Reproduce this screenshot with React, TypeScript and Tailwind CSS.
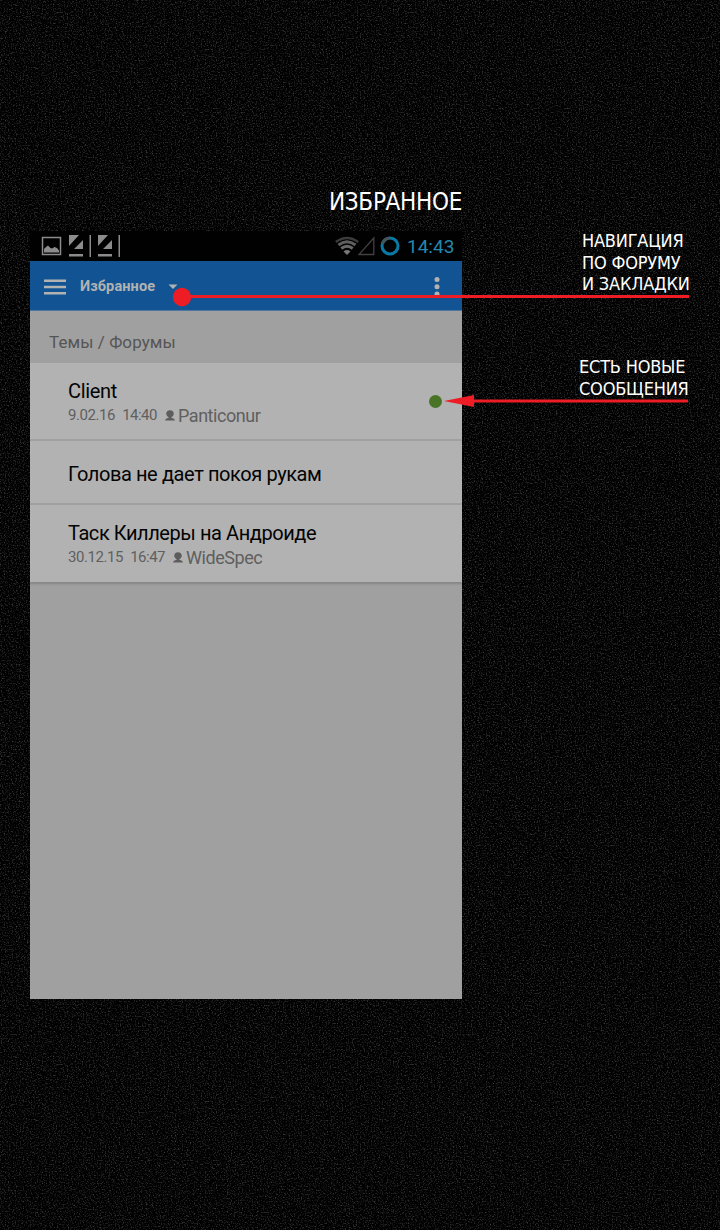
import React from "react";

const PersonIcon = () => (
  <svg width="10" height="11" viewBox="0 0 10 11" className="block shrink-0" fill="#5d5d5d">
    <path d="M1.200 4.200C1.200 1.400 2.600 .2 5 .2S8.800 1.400 8.800 4.200C8.300 5.800 7.200 6.800 6.500 7H3.500C2.800 6.800 1.700 5.800 1.200 4.200ZM0 10.600C0.300 9 1.700 8.300 3.200 8h3.600c1.500.3 2.900 1 3.200 2.600Z" />
    <rect x="3.500" y="6.500" width="3" height="2" />
  </svg>
);

const NoteIcon = () => (
  <svg width="23" height="22" viewBox="0 0 23 22" className="shrink-0" fill="#8c8c8c">
    <path d="M0 0H10L0 11ZM14 5V14H5ZM0 19H14V21.500H0ZM20.500 0H22V22H20.500Z" />
  </svg>
);

const StatusBar = () => (
  <div className="flex h-[30px] items-center bg-[#010101] pl-[11px] pr-2">
    <svg width="21" height="20" viewBox="0 0 21 20" className="mr-[7px] shrink-0">
      <rect x="1.500" y="1.500" width="18" height="17" fill="none" stroke="#8c8c8c" strokeWidth="1.500" />
      <path d="M3 16.500V13L5 11L7 9.500L9.500 12L11 12.500L13.500 11L16 12L18 14.500V16.500Z" fill="#8c8c8c" />
    </svg>
    <NoteIcon />
    <div className="w-[6px]" />
    <NoteIcon />
    <svg width="66" height="22" viewBox="0 0 66 22" className="ml-auto shrink-0">
      <g fill="none" strokeWidth="3">
        <path d="M.8 7Q12 -1 23.200 7" stroke="#3b3b3b" strokeWidth="2.500" />
        <path d="M3.500 10Q12 3.500 20.500 10" stroke="#5f5f5f" />
        <path d="M6.300 13.500Q12 9 17.700 13.500" stroke="#696969" />
      </g>
      <path d="M8.500 16.500Q12 13.700 15.500 16.500L12 20Z" fill="#777" />
      <path d="M24 19.500H38.800V3Z" fill="none" stroke="#414141" strokeWidth="1.300" />
      <circle cx="55" cy="11" r="8" fill="none" stroke="#087ba5" strokeWidth="3" />
      <path d="M47.500 8.500Q49.500 3.500 54.500 3" fill="none" stroke="#4b5356" strokeWidth="3" />
    </svg>
    <span className="ml-[6px] w-[47px] whitespace-nowrap pt-px text-[19px] leading-[30px] text-[#2588ae]">14:43</span>
  </div>
);

const Toolbar = () => (
  <div className="flex h-[50px] items-center border-b border-[#51779f] bg-[#125493] pl-[14px] pr-[21px] pt-[2px]">
    <svg width="22" height="16" viewBox="0 0 22 16" fill="#b2b2b2">
      <path d="M0 .5H22V3H0ZM0 6.800H22V9.300H0ZM0 13H22V15.500H0Z" />
    </svg>
    <span className="ml-[14px] w-[76px] whitespace-nowrap pt-px text-[14.500px] font-bold leading-[20px] tracking-[0.12px] text-[#b2b2b2]">Избранное</span>
    <svg width="10" height="6" viewBox="0 0 10 6" className="ml-3" fill="#b2b2b2">
      <path d="M.5 .5H9.500L5 5Z" />
    </svg>
    <svg width="8" height="20" viewBox="0 0 8 20" className="ml-auto" fill="#b2b2b2">
      <circle cx="4" cy="2.500" r="2.500" />
      <circle cx="4" cy="9.700" r="2.500" />
      <circle cx="4" cy="17" r="2.500" />
    </svg>
  </div>
);

const Meta = ({ date, time, author }: { date: string; time: string; author: string }) => (
  <div className="flex h-[22px] items-center whitespace-nowrap text-[#5f5f5f]">
    <span className="text-[15px] tracking-[-0.42px]">{date}</span>
    <span className="ml-[7px] text-[15px] tracking-[-0.5px]">{time}</span>
    <span className="ml-2 mr-[3px]"><PersonIcon /></span>
    <span className="text-[18px] tracking-[-0.45px]">{author}</span>
  </div>
);

export default function App() {
  return (
    <div className="relative h-[1230px] w-[720px] overflow-hidden bg-black font-['Roboto',sans-serif]">
      <svg className="absolute inset-0" width="720" height="1230">
        <filter id="grain" x="0" y="0" width="100%" height="100%" colorInterpolationFilters="sRGB">
          <feTurbulence type="fractalNoise" baseFrequency="0.73" numOctaves="3" seed="8" />
          <feColorMatrix values="0.6 0 0 0 -0.29 0.6 0 0 0 -0.29 0.6 0 0 0 -0.29 0 0 0 0 1" />
        </filter>
        <rect width="720" height="1230" filter="url(#grain)" />
      </svg>
      <div className="relative flex pl-[30px] pt-[186px]">
        <div className="w-[432px] shrink-0">
          <h1 className="flex h-[45px] justify-end whitespace-nowrap font-['DejaVu_Sans_Condensed','DejaVu_Sans',sans-serif] text-[24px] leading-[32px] text-white">
            <span className="tracking-[-0.3px]">ИЗБРАННОЕ</span>
          </h1>
          <div className="h-[768px] overflow-hidden bg-[#a0a0a0]">
            <StatusBar />
            <Toolbar />
            <div className="flex h-[52px] items-center pl-[19px] pt-[12px] text-[17px] tracking-[0.08px] text-[#555]">
              <span>Темы / Форумы</span>
            </div>
            <div className="bg-[#b2b2b2] shadow-[0_2px_2px_#858585]">
              <div className="flex h-[78px] items-center justify-between border-b-2 border-[#a0a0a0] pl-[38px] pr-5">
                <div className="pb-[2px] pt-[5px]">
                  <div className="whitespace-nowrap text-[20px] leading-[25px] tracking-[-0.35px] text-[#030303]">Client</div>
                  <Meta date="9.02.16" time="14:40" author="Panticonur" />
                </div>
                <div className="size-[13px] rounded-full bg-[#497426]" />
              </div>
              <div className="flex h-16 items-center border-b-2 border-[#a0a0a0] pl-[38px] pt-[3px] text-[20px] tracking-[-0.4px] text-[#030303]">
                <span className="whitespace-nowrap">Голова не дает покоя рукам</span>
              </div>
              <div className="h-[77px] pl-[38px] pt-4">
                <div className="whitespace-nowrap text-[20px] leading-[25px] tracking-[-0.43px] text-[#030303]">Таск Киллеры на Андроиде</div>
                <Meta date="30.12.15" time="16:47" author="WideSpec" />
              </div>
            </div>
          </div>
        </div>
        <div className="flex flex-col whitespace-nowrap pt-[44px] font-['DejaVu_Sans_Condensed','DejaVu_Sans',sans-serif] text-[18px] leading-[21.500px] tracking-[-0.2px] text-white">
          <div className="ml-[120px] flex flex-col items-start">
            <span>НАВИГАЦИЯ</span>
            <span>ПО ФОРУМУ</span>
            <span>И ЗАКЛАДКИ</span>
          </div>
          <div className="ml-[117px] mt-[61px] flex flex-col items-start leading-[22px]">
            <span>ЕСТЬ НОВЫЕ</span>
            <span>СООБЩЕНИЯ</span>
          </div>
        </div>
      </div>
      <svg className="absolute left-[172px] top-[287px]" width="518" height="20" viewBox="0 0 518 20" fill="#ee1c25">
        <circle cx="10" cy="10" r="9.200" />
        <rect x="10" y="8" width="507" height="3" />
      </svg>
      <svg className="absolute left-[444px] top-[394px]" width="245" height="14" viewBox="0 0 245 14" fill="#ee1c25">
        <path d="M0 7L30 1V13ZM29 5.500H244V8.500H29Z" />
      </svg>
    </div>
  );
}
